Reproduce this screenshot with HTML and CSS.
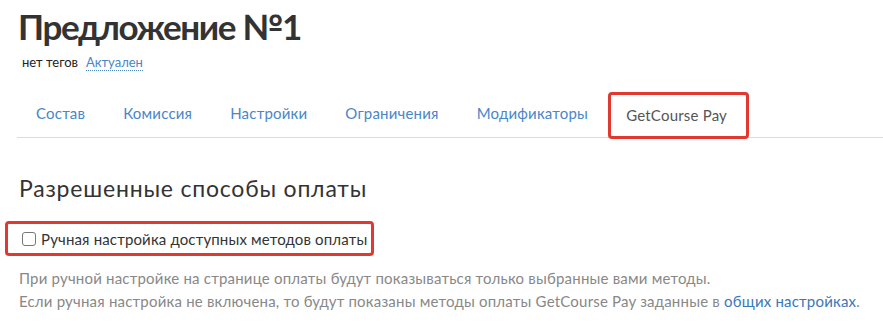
FILE: index.html
```html
<!DOCTYPE html>
<html lang="ru">
<head>
<meta charset="utf-8">
<link rel="stylesheet" href="styles.css">
</head>
<body>
<div class="page">
  <h1 class="title">Предложение №1</h1>
  <div class="meta">
    <span class="tags">нет тегов</span>
    <a class="status">Актуален</a>
  </div>
  <nav class="tabs">
    <a class="tab">Состав</a>
    <a class="tab">Комиссия</a>
    <a class="tab">Настройки</a>
    <a class="tab">Ограничения</a>
    <a class="tab">Модификаторы</a>
    <a class="tab tab-active">GetCourse Pay</a>
  </nav>
  <h2 class="section-title">Разрешенные способы оплаты</h2>
  <label class="manual">
    <span class="box"></span>
    <span class="manual-text">Ручная настройка доступных методов оплаты</span>
  </label>
  <p class="help">При ручной настройке на странице оплаты будут показываться только выбранные вами методы.<br>Если ручная настройка не включена, то будут показаны методы оплаты GetCourse Pay заданные в <a class="link">общих настройках</a>.</p>
</div>
</body>
</html>
```
FILE: styles.css
```css
html, body {
  margin: 0;
  padding: 0;
  background: #fff;
}
body {
  font-family: Lato, "Noto Sans", sans-serif;
  color: #333;
}
.page {
  padding: 6px 0 0 0;
}
.title {
  margin: 0 0 0 18px;
  font-size: 35px;
  font-weight: 700;
  line-height: 40px;
  letter-spacing: -1.4px;
  color: #333;
}
.meta {
  margin: 8px 0 0 22px;
  font-size: 13px;
  line-height: 16px;
  display: flex;
  gap: 8px;
}
.tags { color: #222; }
.status {
  color: #4a86c8;
  border-bottom: 1px dotted #4a86c8;
}
.tabs {
  margin: 21px 0 0 17px;
  border-bottom: 1px solid #ddd;
  display: flex;
  align-items: flex-start;
  height: 45px;
}
.tab {
  font-size: 15px;
  letter-spacing: 0.2px;
  color: #4a86c8;
  padding: 0 19px 3px;
  height: 45px;
  box-sizing: border-box;
  display: flex;
  align-items: center;
  white-space: nowrap;
}
.tab-active {
  color: #555;
  border: 3px solid #e0392f;
  border-radius: 4px;
  margin-left: 1px;
  padding: 0 19px 1px 15px;
  height: 47px;
  box-sizing: border-box;
}
.section-title {
  margin: 36px 0 0 19px;
  font-size: 23px;
  font-weight: 400;
  line-height: 28px;
  letter-spacing: 0.8px;
  color: #333;
}
.manual {
  margin: 19px 0 0 5px;
  width: 369px;
  height: 35px;
  box-sizing: border-box;
  border: 3px solid #e0392f;
  border-radius: 4px;
  display: flex;
  align-items: center;
  padding-left: 14px;
  gap: 5px;
}
.box {
  width: 12px;
  height: 12px;
  border: 1px solid #777;
  border-radius: 3px;
  background: #fff;
}
.manual-text {
  font-size: 15px;
  letter-spacing: 0.15px;
  color: #333;
}
.help {
  margin: 11px 0 0 19px;
  font-size: 15px;
  line-height: 23px;
  letter-spacing: 0.2px;
  color: #888;
}
.link { color: #3b78b8; }
```
